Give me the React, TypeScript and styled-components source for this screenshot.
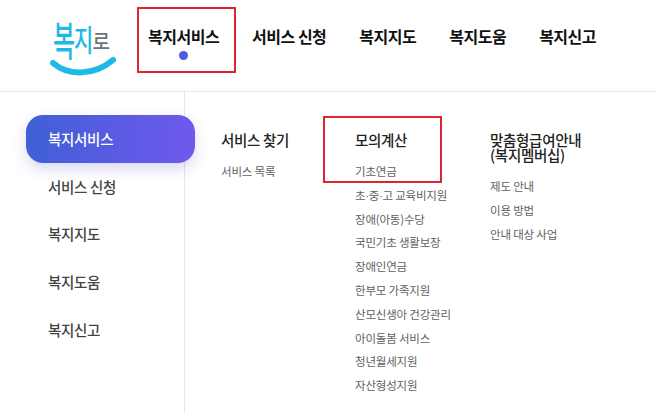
import styled, { createGlobalStyle } from 'styled-components';

const GlobalStyle = createGlobalStyle`
  html, body {
    margin: 0;
    padding: 0;
    background: #fff;
  }
  body {
    font-family: "Noto Sans CJK KR", "Noto Sans", sans-serif;
    color: #222;
  }
  ul {
    list-style: none;
    margin: 0;
    padding: 0;
  }
`;

const Page = styled.div`
  position: relative;
  width: 656px;
  height: 412px;
  overflow: hidden;
`;

const Header = styled.header`
  display: flex;
  align-items: flex-start;
  height: 92px;
  padding-left: 48px;
  box-sizing: border-box;
  border-bottom: 1px solid #e9e9e9;
`;

const Logo = styled.div`
  position: relative;
  width: 68px;
  height: 62px;
  margin-top: 15px;
  flex-shrink: 0;
`;

const LogoText = styled.div`
  display: flex;
  align-items: center;
  height: 48px;
  padding-left: 5px;
`;

const LogoGlyph = styled.span<{ $size: number; $stretch: number; $grey?: boolean }>`
  font-size: ${p => p.$size}px;
  line-height: 1;
  font-weight: 500;
  letter-spacing: -1px;
  color: ${p => (p.$grey ? '#6f7175' : '#1fb9e8')};
  transform: scaleY(${p => p.$stretch});
`;

const Smile = styled.svg`
  position: absolute;
  left: 0;
  top: 41px;
`;

const TopNav = styled.ul`
  display: flex;
  margin-left: 32px;
  gap: 33px;
`;

const TopItem = styled.li<{ $active?: boolean }>`
  position: relative;
  height: 72px;
  line-height: 72px;
  font-size: 16px;
  font-weight: 700;
  letter-spacing: -0.5px;
  color: #111;
  white-space: nowrap;

  ${p =>
    p.$active &&
    `
    &::after {
      content: '';
      position: absolute;
      left: 50%;
      top: 51px;
      width: 9px;
      height: 9px;
      margin-left: -4.5px;
      border-radius: 50%;
      background: #4a5fd8;
    }
  `}
`;

const Body = styled.div`
  display: flex;
  height: 320px;
`;

const Side = styled.ul`
  width: 185px;
  box-sizing: border-box;
  padding-top: 23px;
  border-right: 1px solid #e6e6e6;
  flex-shrink: 0;
`;

const SideItem = styled.li<{ $active?: boolean }>`
  width: 169px;
  height: 47.7px;
  margin-left: 26px;
  padding-left: 22px;
  box-sizing: border-box;
  line-height: 47.7px;
  font-size: 14.5px;
  font-weight: 500;
  letter-spacing: -0.3px;
  color: ${p => (p.$active ? '#fff' : '#444')};
  border-radius: 17px;
  background: ${p => (p.$active ? 'linear-gradient(90deg, #3f60d6, #6f58ee)' : 'none')};
  box-shadow: ${p => (p.$active ? '0 6px 14px rgba(80, 80, 190, 0.22)' : 'none')};
`;

const Columns = styled.div`
  display: flex;
  padding-top: 40px;
  padding-left: 36px;
`;

const Column = styled.section<{ $width: number }>`
  width: ${p => p.$width}px;
  flex-shrink: 0;
`;

const ColumnTitle = styled.h3`
  margin: 0 0 13px;
  font-size: 14.5px;
  line-height: 15px;
  font-weight: 500;
  letter-spacing: -0.3px;
  color: #222;
  white-space: pre-line;
`;

const LinkItem = styled.li`
  height: 23.8px;
  line-height: 23.8px;
  font-size: 11.5px;
  letter-spacing: -0.2px;
  color: #5f5f5f;
  white-space: nowrap;
`;

const NarrowDot = styled.span`
  font-family: "Liberation Sans", sans-serif;
  letter-spacing: -0.5px;
`;

const RedBox = styled.div<{ $x: number; $y: number; $w: number; $h: number }>`
  position: absolute;
  left: ${p => p.$x}px;
  top: ${p => p.$y}px;
  width: ${p => p.$w}px;
  height: ${p => p.$h}px;
  box-sizing: border-box;
  border: 2px solid #e0242f;
`;

const topMenu = ['복지서비스', '서비스 신청', '복지지도', '복지도움', '복지신고'];

const calcItems = [
  '기초연금',
  <>
    초<NarrowDot>·</NarrowDot>중<NarrowDot>·</NarrowDot>고 교육비지원
  </>,
  '장애(아동)수당',
  '국민기초 생활보장',
  '장애인연금',
  '한부모 가족지원',
  '산모신생아 건강관리',
  '아이돌봄 서비스',
  '청년월세지원',
  '자산형성지원',
];

const App = () => {
  return (
    <Page>
      <GlobalStyle />
      <Header>
        <Logo>
          <LogoText>
            <LogoGlyph $size={24} $stretch={1.7}>복</LogoGlyph>
            <LogoGlyph $size={21} $stretch={1.4}>지</LogoGlyph>
            <LogoGlyph $size={19} $stretch={1.1} $grey>로</LogoGlyph>
          </LogoText>
          <Smile width="68" height="24" viewBox="0 0 68 24">
            <path d="M5 7 C 20 20, 46 20, 65 4" fill="none" stroke="#1fb9e8" strokeWidth="6" strokeLinecap="round" />
          </Smile>
        </Logo>
        <TopNav>
          {topMenu.map((label, i) => (
            <TopItem key={label} $active={i === 0}>
              {label}
            </TopItem>
          ))}
        </TopNav>
      </Header>
      <Body>
        <Side>
          {topMenu.map((label, i) => (
            <SideItem key={label} $active={i === 0}>
              {label}
            </SideItem>
          ))}
        </Side>
        <Columns>
          <Column $width={134}>
            <ColumnTitle>서비스 찾기</ColumnTitle>
            <ul>
              <LinkItem>서비스 목록</LinkItem>
            </ul>
          </Column>
          <Column $width={135}>
            <ColumnTitle>모의계산</ColumnTitle>
            <ul>
              {calcItems.map((item, i) => (
                <LinkItem key={i}>{item}</LinkItem>
              ))}
            </ul>
          </Column>
          <Column $width={130}>
            <ColumnTitle>{'맞춤형급여안내\n(복지멤버십)'}</ColumnTitle>
            <ul>
              <LinkItem>제도 안내</LinkItem>
              <LinkItem>이용 방법</LinkItem>
              <LinkItem>안내 대상 사업</LinkItem>
            </ul>
          </Column>
        </Columns>
      </Body>
      <RedBox $x={137} $y={7} $w={99} $h={66} />
      <RedBox $x={323} $y={116} $w={119} $h={67} />
    </Page>
  );
};

export default App;
